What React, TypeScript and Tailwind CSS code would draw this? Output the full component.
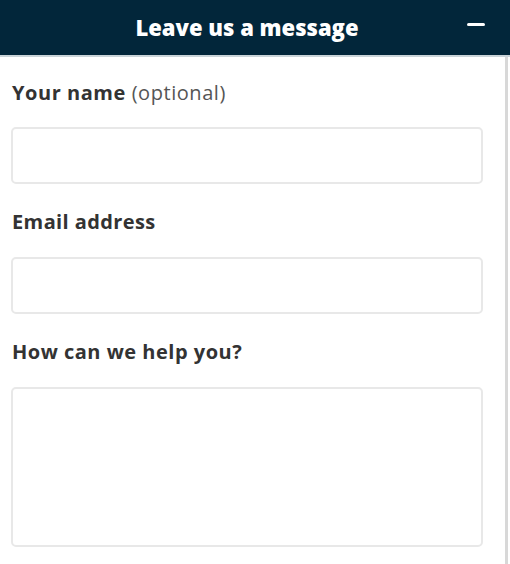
import React from "react";

export default function App() {
  return (
    <div
      className="w-[510px] h-[564px] bg-white flex flex-col overflow-hidden"
      style={{ fontFamily: '"Open Sans", "Liberation Sans", sans-serif' }}
    >
      <div className="h-[55px] bg-[#02263a] flex items-center relative shrink-0">
        <div className="flex-1 text-center text-white font-extrabold text-[22px] leading-[28px] pr-[16px] pb-[2px]">
          Leave us a message
        </div>
        <div className="absolute left-[467px] top-[23px] w-[18px] h-[3px] bg-white rounded-sm" />
      </div>
      <div className="h-[2px] bg-[#c9d3d8] shrink-0" />
      <div className="flex-1 flex">
        <div className="flex-1 flex flex-col pl-[11px] pr-[22px] pt-[24px]">
          <div className="pl-[1px] text-[20px] tracking-[0.55px] text-[#333] h-[24px] leading-[24px] whitespace-nowrap">
            <span className="font-bold">Your name</span>{" "}
            <span className="text-[#555]">(optional)</span>
          </div>
          <div className="mt-[22px] h-[57px] border-2 border-[#e8e8e8] rounded-[5px]" />
          <div className="pl-[1px] mt-[26px] text-[20px] tracking-[0.4px] font-bold text-[#333] h-[24px] leading-[24px]">
            Email address
          </div>
          <div className="mt-[23px] h-[57px] border-2 border-[#e8e8e8] rounded-[5px]" />
          <div className="pl-[1px] mt-[26px] text-[20px] tracking-[0.5px] font-bold text-[#333] h-[24px] leading-[24px]">
            How can we help you?
          </div>
          <div className="mt-[23px] h-[160px] border-2 border-[#e8e8e8] rounded-[5px]" />
        </div>
        <div className="w-[3px] bg-[#d8d8d8] mr-[2px]" />
      </div>
    </div>
  );
}
